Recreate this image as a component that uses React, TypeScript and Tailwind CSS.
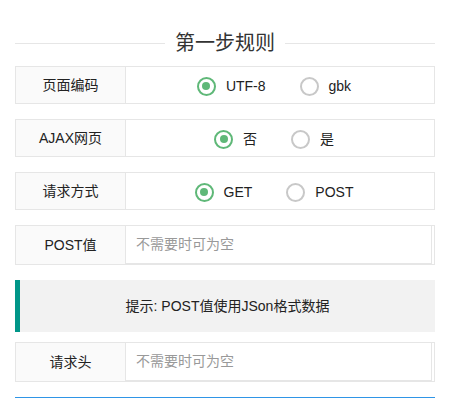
import React from "react";

function Radio({ checked, label }: { checked?: boolean; label: string }) {
  return (
    <div className="flex items-center">
      <span
        className={
          "w-[19px] h-[19px] rounded-full border-2 flex items-center justify-center " +
          (checked ? "border-[#5FB878]" : "border-[#c8c8c8]")
        }
      >
        {checked ? <span className="w-[8px] h-[8px] rounded-full bg-[#5FB878]" /> : null}
      </span>
      <span className="ml-[10px] text-[14px] text-[#222]">{label}</span>
    </div>
  );
}

function RadioRow({ label, options }: { label: string; options: { label: string; checked?: boolean }[] }) {
  return (
    <div className="flex h-[38px] border border-[#e6e6e6]">
      <div className="w-[110px] shrink-0 bg-[#fafafa] border-r border-[#e6e6e6] flex items-center justify-center text-[14px] text-[#222]">
        {label}
      </div>
      <div className="flex-1 flex items-center justify-center gap-[34px] pr-[12px] pt-[2px]">
        {options.map((o) => (
          <Radio key={o.label} label={o.label} checked={o.checked} />
        ))}
      </div>
    </div>
  );
}

function InputRow({ label }: { label: string }) {
  return (
    <div className="flex h-[40px] border border-[#e6e6e6]">
      <div className="w-[110px] shrink-0 bg-[#fafafa] border-r border-[#e6e6e6] flex items-center justify-center text-[14px] text-[#222]">
        {label}
      </div>
      <div className="flex-1 mr-[2px] border-r border-b border-[#e6e6e6] bg-white flex items-center pl-[10px] text-[14px] text-[#999]">
        不需要时可为空
      </div>
    </div>
  );
}

export default function App() {
  return (
    <div
      className="w-[454px] h-[401px] bg-white pl-[15px] pr-[19px] overflow-hidden"
      style={{ fontFamily: '"Liberation Sans", Arial, "Noto Sans CJK SC", sans-serif' }}
    >
      <div className="mt-[30px] h-[26px] flex items-center">
        <div className="flex-1 h-px bg-[#e6e6e6]" />
        <div className="px-[10px] text-[20px] text-[#333] leading-[26px]">第一步规则</div>
        <div className="flex-1 h-px bg-[#e6e6e6]" />
      </div>
      <div className="mt-[10px]">
        <RadioRow label="页面编码" options={[{ label: "UTF-8", checked: true }, { label: "gbk" }]} />
      </div>
      <div className="mt-[15px]">
        <RadioRow label="AJAX网页" options={[{ label: "否", checked: true }, { label: "是" }]} />
      </div>
      <div className="mt-[15px]">
        <RadioRow label="请求方式" options={[{ label: "GET", checked: true }, { label: "POST" }]} />
      </div>
      <div className="mt-[15px]">
        <InputRow label="POST值" />
      </div>
      <div className="mt-[15px] h-[52px] bg-[#f2f2f2] border-l-[5px] border-[#009688] flex items-center justify-center text-[14px] text-[#222]">
        提示: POST值使用JSon格式数据
      </div>
      <div className="mt-[10px]">
        <InputRow label="请求头" />
      </div>
      <div className="mt-[15px] h-px bg-[#2f95e6]" />
    </div>
  );
}
